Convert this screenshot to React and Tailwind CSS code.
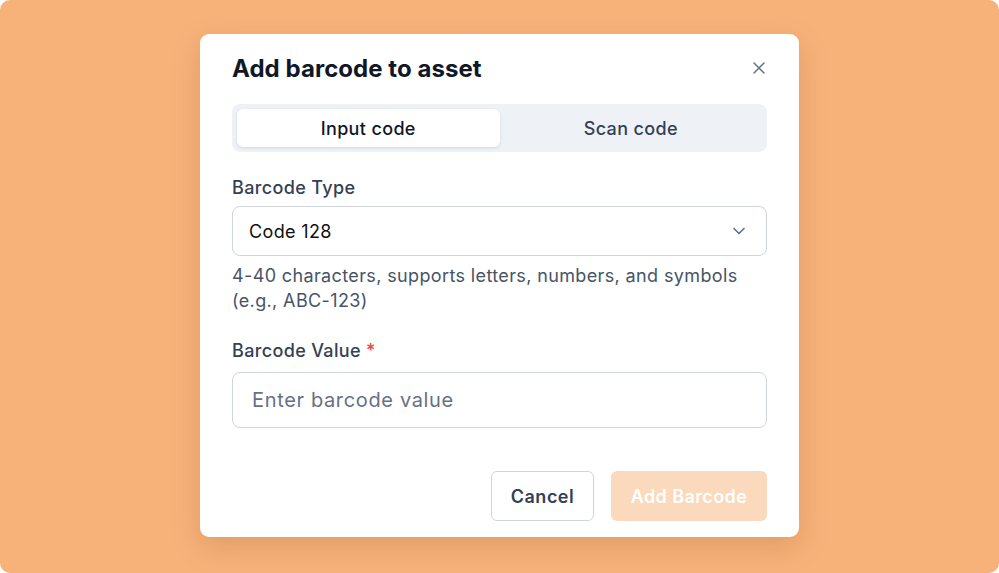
import React, { useState } from 'react';

const font = { fontFamily: 'Inter, "Noto Sans", sans-serif' };

const App = () => {
  const [tab, setTab] = useState('input');

  const tabClass = (active) =>
    `flex-1 rounded-[6px] text-[18px] font-medium tracking-[0.35px] ${
      active ? 'bg-white text-[#101828] shadow-[0_1px_3px_rgba(16,24,40,0.12)]' : 'text-[#344054]'
    }`;

  return (
    <div className="w-[999px] h-[573px] bg-white" style={font}>
      <div className="w-full h-full bg-[#f7b27a] rounded-[10px] flex justify-center pt-[34px]">
        <div className="w-[599px] h-[503px] bg-white rounded-[9px] shadow-[0_10px_30px_rgba(120,60,10,0.18)] px-[32px] flex flex-col">
          {/* Header */}
          <div className="flex items-center justify-between pt-[20px]">
            <h2 className="text-[24px] leading-[30px] font-bold text-[#101828] tracking-[0.05px]">Add barcode to asset</h2>
            <button className="text-[#667085] -mr-[2px] -mt-[2px]">
              <svg width="20" height="20" viewBox="0 0 24 24" fill="none" stroke="currentColor" strokeWidth="1.8" strokeLinecap="round">
                <path d="M6 6l12 12M18 6L6 18" />
              </svg>
            </button>
          </div>

          {/* Tabs */}
          <div className="mt-[20px] h-[48px] bg-[#eef2f7] rounded-[8px] p-[5px] flex">
            <button onClick={() => setTab('input')} className={tabClass(tab === 'input')}>
              Input code
            </button>
            <button onClick={() => setTab('scan')} className={tabClass(tab === 'scan')}>
              Scan code
            </button>
          </div>

          {/* Barcode type */}
          <label className="mt-[24px] text-[18px] leading-[24px] font-medium text-[#344054] tracking-[0.35px]">Barcode Type</label>
          <div className="mt-[6px] h-[50px] border border-[#d0d5dd] rounded-[8px] flex items-center justify-between pl-[16px] pr-[17px]">
            <span className="text-[18px] text-[#101010] tracking-[0.35px]">Code 128</span>
            <svg width="20" height="20" viewBox="0 0 24 24" fill="none" stroke="#667085" strokeWidth="2" strokeLinecap="round" strokeLinejoin="round">
              <path d="M6 9l6 6 6-6" />
            </svg>
          </div>
          <p className="mt-[7px] text-[18px] leading-[25px] text-[#475467] tracking-[0.37px]">
            4-40 characters, supports letters, numbers, and symbols
            <br />
            (e.g., ABC-123)
          </p>

          {/* Barcode value */}
          <label className="mt-[26px] text-[18px] leading-[24px] font-medium text-[#344054] tracking-[0.35px]">
            Barcode Value <span className="text-[#f04438]">*</span>
          </label>
          <input
            placeholder="Enter barcode value"
            className="mt-[9px] h-[56px] border border-[#d0d5dd] rounded-[8px] px-[19px] text-[20px] tracking-[0.65px] text-[#101828] placeholder:text-[#667085] outline-none"
          />

          {/* Footer */}
          <div className="mt-[43px] flex justify-end gap-[17px]">
            <button className="h-[50px] w-[103px] border border-[#d0d5dd] rounded-[6px] text-[18px] font-semibold tracking-[0.5px] text-[#344054]">
              Cancel
            </button>
            <button disabled className="h-[50px] w-[156px] rounded-[6px] bg-[#fbd9bc] text-[18px] font-semibold tracking-[0.4px] text-white">
              Add Barcode
            </button>
          </div>
        </div>
      </div>
    </div>
  );
};

export default App;
